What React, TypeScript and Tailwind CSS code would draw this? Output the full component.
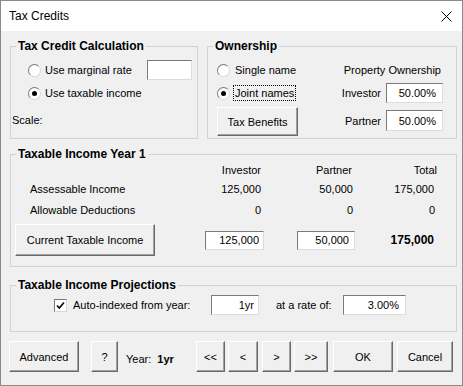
import React from "react";

type Kids = { children?: React.ReactNode; className?: string };

const Radio = ({ checked }: { checked?: boolean }) => (
  <span className="relative inline-flex items-center justify-center w-[13px] h-[13px] rounded-full bg-white border border-t-[#7a7a7a] border-l-[#7a7a7a] border-r-[#d8d8d8] border-b-[#d8d8d8] shrink-0">
    {checked && <span className="w-[5px] h-[5px] rounded-full bg-black" />}
  </span>
);

const CheckBox = () => (
  <span className="inline-flex items-center justify-center w-[13px] h-[13px] bg-white border border-t-[#7a7a7a] border-l-[#7a7a7a] border-r-[#d8d8d8] border-b-[#d8d8d8] shrink-0">
    <svg width="9" height="9" viewBox="0 0 9 9">
      <path d="M1 4.5 L3.3 7 L8 1.5" stroke="#000" strokeWidth="1.6" fill="none" />
    </svg>
  </span>
);

const Field = ({ children, className }: Kids) => (
  <div
    className={`flex items-center justify-end bg-white border border-t-[#7a7a7a] border-l-[#7a7a7a] border-r-[#dcdcdc] border-b-[#dcdcdc] ${className}`}
  >
    {children}
  </div>
);

const Btn = ({ children, className }: Kids) => (
  <div
    className={`flex items-center justify-center shrink-0 whitespace-nowrap bg-[#f0f0f0] border border-t-white border-l-white border-r-[#696969] border-b-[#696969] shadow-[inset_-1px_-1px_0_#a0a0a0] ${className}`}
  >
    {children}
  </div>
);

const Group = ({ title, children, className }: Kids & { title: string }) => (
  <fieldset className={`border border-[#d2d2d2] shrink-0 ${className}`}>
    <legend className="ml-[5px] px-[2px] font-bold text-[12px] leading-[16px]">{title}</legend>
    {children}
  </fieldset>
);

export default function App() {
  return (
    <div className="w-[463px] h-[386px] flex flex-col bg-[#f0f0f0] border border-[#8a8a8a] text-[11px] leading-[16px] text-black whitespace-nowrap font-['Liberation_Sans',Arial,sans-serif]">
      {/* title bar */}
      <div className="h-[30px] bg-white flex items-center justify-between pl-[8px] pr-[10px] shrink-0 text-[12px]">
        <span>Tax Credits</span>
        <svg width="11" height="11" viewBox="0 0 11 11">
          <path d="M0.5 0.5 L10.5 10.5 M10.5 0.5 L0.5 10.5" stroke="#000" strokeWidth="1" />
        </svg>
      </div>

      <div className="flex flex-col pl-[9px] pr-[6px] pt-[7px]">
        <div className="flex gap-[9px]">
          <Group title="Tax Credit Calculation" className="w-[188px] h-[101px]">
            <div className="mt-[6px] h-[20px] flex items-center pl-[17px]">
              <Radio />
              <span className="ml-[4px]">Use marginal rate</span>
              <Field className="ml-auto mr-[5px] w-[45px] h-[20px]" />
            </div>
            <div className="mt-[3px] h-[20px] flex items-center pl-[17px]">
              <Radio checked />
              <span className="ml-[4px]">Use taxable income</span>
            </div>
            <div className="mt-[7px] h-[20px] flex items-center pl-[1px]">Scale:</div>
          </Group>

          <Group title="Ownership" className="w-[250px] h-[101px]">
            <div className="flex pl-[9px] pr-[13px]">
              <div className="flex flex-col w-[81px]">
                <div className="mt-[6px] h-[20px] flex items-center">
                  <Radio />
                  <span className="ml-[5px]">Single name</span>
                </div>
                <div className="mt-[3px] h-[20px] flex items-center">
                  <Radio checked />
                  <span className="ml-[4px] px-[1px] outline outline-1 outline-dotted outline-black leading-[14px]">Joint names</span>
                </div>
                <Btn className="mt-[4px] w-[81px] h-[29px]">Tax Benefits</Btn>
              </div>
              <div className="flex flex-col items-end ml-auto">
                <div className="mt-[6px] h-[20px] flex items-center pr-[2px]">Property Ownership</div>
                <div className="mt-[3px] h-[20px] flex items-center">
                  <span className="mr-[5px]">Investor</span>
                  <Field className="w-[57px] h-[20px] pr-[6px]">50.00%</Field>
                </div>
                <div className="mt-[7px] h-[21px] flex items-center">
                  <span className="mr-[5px]">Partner</span>
                  <Field className="w-[57px] h-[21px] pr-[6px]">50.00%</Field>
                </div>
              </div>
            </div>
          </Group>
        </div>

        <Group title="Taxable Income Year 1" className="mt-[7px] w-[447px] h-[121px]">
          <div className="h-[16px] flex">
            <div className="w-[194px]" />
            <div className="w-[59px] text-right pr-[3px]">Investor</div>
            <div className="w-[33px]" />
            <div className="w-[58px] text-right pr-[3px]">Partner</div>
            <div className="w-[82px] text-right">Total</div>
          </div>
          <div className="mt-[3px] h-[16px] flex">
            <div className="w-[194px] pl-[19px]">Assessable Income</div>
            <div className="w-[59px] text-right pr-[3px]">125,000</div>
            <div className="w-[33px]" />
            <div className="w-[58px] text-right pr-[2px]">50,000</div>
            <div className="w-[82px] text-right pr-[3px]">175,000</div>
          </div>
          <div className="mt-[5px] h-[16px] flex">
            <div className="w-[194px] pl-[19px]">Allowable Deductions</div>
            <div className="w-[59px] text-right pr-[3px]">0</div>
            <div className="w-[33px]" />
            <div className="w-[58px] text-right pr-[2px]">0</div>
            <div className="w-[82px] text-right pr-[2px]">0</div>
          </div>
          <div className="mt-[6px] h-[32px] flex items-center">
            <div className="w-[194px] pl-[4px]">
              <Btn className="w-[140px] h-[32px]">Current Taxable Income</Btn>
            </div>
            <Field className="w-[59px] h-[19px] pr-[4px]">125,000</Field>
            <div className="w-[33px]" />
            <Field className="w-[58px] h-[19px] pr-[5px]">50,000</Field>
            <div className="w-[82px] text-right pr-[3px] font-bold text-[12px]">175,000</div>
          </div>
        </Group>

        <Group title="Taxable Income Projections" className="mt-[10px] w-[447px] h-[55px]">
          <div className="mt-[2px] h-[20px] flex items-center pl-[43px]">
            <CheckBox />
            <span className="ml-[6px] w-[138px]">Auto-indexed from year:</span>
            <Field className="w-[48px] h-[20px] pr-[4px]">1yr</Field>
            <span className="ml-[17px] w-[67px]">at a rate of:</span>
            <Field className="w-[63px] h-[20px] pr-[6px]">3.00%</Field>
          </div>
        </Group>
      </div>

      <div className="mt-[9px] h-[31px] flex pl-[8px]">
        <Btn className="w-[70px] h-[31px]">Advanced</Btn>
        <Btn className="ml-[12px] w-[27px] h-[31px]">?</Btn>
        <div className="ml-[8px] w-[70px] flex items-center pt-[5px]">
          <span>Year:</span>
          <span className="ml-[6px] font-bold">1yr</span>
        </div>
        <Btn className="w-[29px] h-[31px]">&lt;&lt;</Btn>
        <Btn className="ml-[3px] w-[30px] h-[31px]">&lt;</Btn>
        <Btn className="ml-[4px] w-[29px] h-[31px]">&gt;</Btn>
        <Btn className="ml-[3px] w-[34px] h-[31px]">&gt;&gt;</Btn>
        <Btn className="ml-[5px] w-[60px] h-[31px]">OK</Btn>
        <Btn className="ml-[4px] w-[56px] h-[31px]">Cancel</Btn>
      </div>
    </div>
  );
}
